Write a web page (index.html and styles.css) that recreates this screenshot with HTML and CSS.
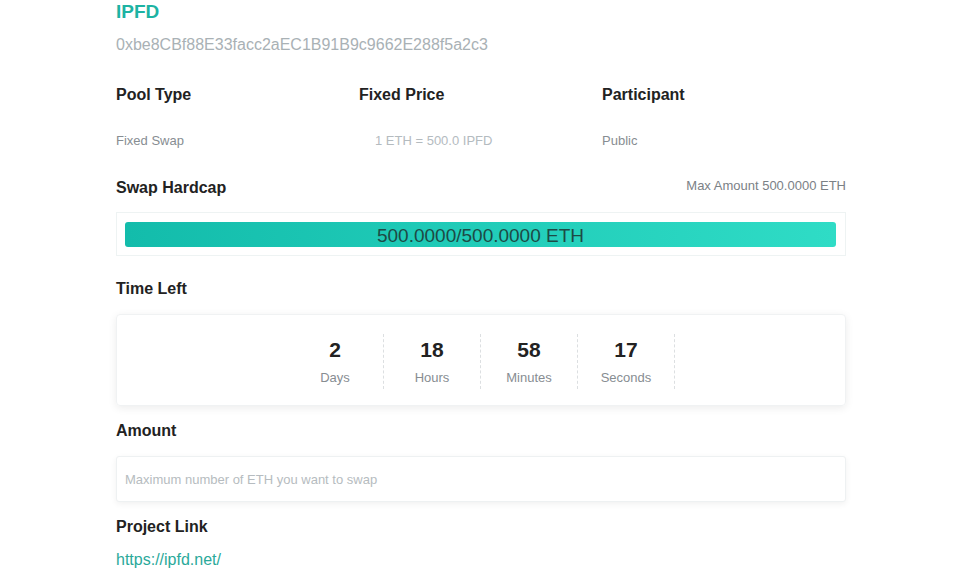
FILE: index.html
```html
<!doctype html>
<html lang="en">
<head>
    <meta charset="UTF-8">
    <title>IPFD Pool</title>
    <link rel="stylesheet" href="styles.css">
</head>
<body>
<div class="pool">
    <h1 class="title">IPFD</h1>
    <p class="address">0xbe8CBf88E33facc2aEC1B91B9c9662E288f5a2c3</p>

    <ul class="info">
        <li>
            <h3>Pool Type</h3>
            <p>Fixed Swap</p>
        </li>
        <li>
            <h3>Fixed Price</h3>
            <p class="price">1 ETH = 500.0 IPFD</p>
        </li>
        <li>
            <h3>Participant</h3>
            <p>Public</p>
        </li>
    </ul>

    <div class="row">
        <h3>Swap Hardcap</h3>
        <span class="max">Max Amount 500.0000 ETH</span>
    </div>
    <div class="progress">
        <div class="bar" style="width: 100%">500.0000/500.0000 ETH</div>
    </div>

    <h3 class="label">Time Left</h3>
    <div class="countdown">
        <ol>
            <li><b>2</b><span>Days</span></li>
            <li><b>18</b><span>Hours</span></li>
            <li><b>58</b><span>Minutes</span></li>
            <li><b>17</b><span>Seconds</span></li>
        </ol>
    </div>

    <h3 class="label">Amount</h3>
    <input class="amount" type="text" placeholder="Maximum number of ETH you want to swap">

    <h3 class="label">Project Link</h3>
    <a class="link" href="#">https://ipfd.net/</a>
</div>
</body>
</html>
```

FILE: styles.css
```css
* {
    margin: 0;
    padding: 0;
    list-style: none;
    box-sizing: border-box;
}

body {
    background: #fff;
    font-family: "Liberation Sans", Arial, sans-serif;
    color: #222;
}

.pool {
    width: 730px;
    margin-left: 116px;
}

h3 {
    font-size: 16px;
    line-height: 20px;
    font-weight: bold;
    color: #222;
}

.title {
    font-size: 19px;
    line-height: 24px;
    color: #1db3a3;
}

.address {
    margin-top: 11px;
    font-size: 16px;
    line-height: 20px;
    color: #a9b1b5;
}

.info {
    display: flex;
    margin-top: 30px;
}

.info li {
    width: 243px;
}

.info p {
    margin-top: 27px;
    font-size: 13px;
    line-height: 18px;
    color: #878d92;
}

.info .price {
    padding-left: 16px;
    color: #b4bbbf;
}

.row {
    display: flex;
    justify-content: space-between;
    align-items: flex-start;
    margin-top: 28px;
}

.max {
    font-size: 13px;
    line-height: 16px;
    color: #7b8186;
}

.progress {
    margin-top: 14px;
    height: 44px;
    padding: 9px 9px 8px 8px;
    border: 1px solid #eef3f3;
}

.bar {
    height: 25px;
    border-radius: 3px;
    background: linear-gradient(90deg, #13bcab, #2fdcc6);
    text-align: center;
    font-size: 19px;
    line-height: 27px;
    color: #1d4a45;
}

.label {
    margin-top: 23px;
}

.countdown {
    margin-top: 15px;
    height: 92px;
    padding: 19px 0 18px;
    border: 1px solid #f0f2f3;
    border-radius: 4px;
    box-shadow: 0 2px 8px rgba(0, 0, 0, 0.08);
}

.countdown ol {
    display: flex;
    justify-content: center;
}

.countdown li {
    width: 97px;
    height: 55px;
    padding-top: 3px;
    border-right: 1px dashed #dcdfe1;
    text-align: center;
}

.countdown b {
    display: block;
    font-size: 21px;
    line-height: 26px;
    color: #222;
}

.countdown span {
    display: block;
    margin-top: 6px;
    font-size: 13px;
    line-height: 18px;
    color: #878d92;
}

.countdown + .label,
.amount + .label {
    margin-top: 15px;
}

.amount {
    display: block;
    width: 100%;
    height: 46px;
    margin-top: 15px;
    padding: 0 8px;
    border: 1px solid #eef1f2;
    border-radius: 3px;
    box-shadow: 0 2px 6px rgba(0, 0, 0, 0.06);
    font-family: inherit;
    font-size: 13px;
    outline: none;
}

.amount::placeholder {
    color: #b6bcc0;
}

.link {
    display: block;
    margin-top: 13px;
    font-size: 16px;
    line-height: 20px;
    color: #2aa99a;
    text-decoration: none;
}
```
